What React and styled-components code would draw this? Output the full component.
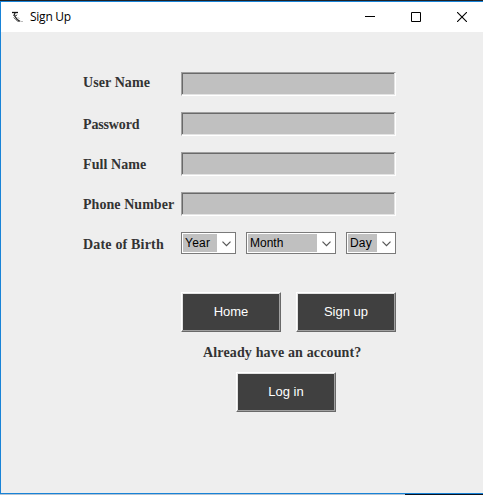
import React from 'react';
import styled, { createGlobalStyle } from 'styled-components';

const GlobalStyle = createGlobalStyle`
  * { box-sizing: border-box; }
  body { margin: 0; overflow: hidden; background: #ededed; }
`;

const Window = styled.div`
  width: 483px;
  height: 495px;
  display: flex;
  flex-direction: column;
`;

const TopEdge = styled.div`
  height: 1px;
  flex: none;
  background: #1f2226;
`;

const Frame = styled.div`
  flex: 1;
  display: flex;
  flex-direction: column;
  border: solid #1883d7;
  border-width: 1px 0 1px 1px;
  background: #eee;
`;

const BottomEdge = styled.div`
  height: 1px;
  flex: none;
  background: linear-gradient(to right, #b4c4d4 405px, #0a1220 405px);
`;

const TitleBar = styled.header`
  height: 30px;
  flex: none;
  display: flex;
  align-items: center;
  background: #fff;
  padding-left: 9px;
`;

const Title = styled.h1`
  margin: 0 auto 0 6px;
  font: 12px/16px 'Open Sans', 'Noto Sans', sans-serif;
  letter-spacing: -0.25px;
  color: #000;
`;

const WindowControl = styled.button`
  width: 46px;
  height: 30px;
  padding: 0;
  border: 0;
  background: none;
  display: grid;
  place-items: center;
`;

const Controls = styled.div`
  display: flex;
  margin-right: -2px;
`;

const Form = styled.form`
  width: 314px;
  margin: 40px 0 0 82px;
  display: flex;
  flex-direction: column;
`;

const FieldRow = styled.div`
  display: flex;
  height: 24px;
  margin-bottom: 16px;
`;

const Label = styled.label`
  width: 98px;
  flex: none;
  padding-top: ${(p) => p.$top}px;
  font: bold 14px/16px 'Liberation Serif', serif;
  letter-spacing: ${(p) => p.$spacing || 0}px;
  white-space: nowrap;
  color: #333;
`;

const Input = styled.input`
  width: 215px;
  height: 24px;
  padding: 0 2px;
  border: 1px solid;
  border-color: #a0a0a0 #fff #fff #a0a0a0;
  border-radius: 0;
  outline: 0;
  background: #c0c0c0;
  box-shadow: inset -1px -1px #e3e3e3, inset 1px 1px #696969;
`;

const Combos = styled.div`
  display: flex;
  gap: 10px;
`;

const Combo = styled.div`
  width: ${(p) => p.$width}px;
  height: 22px;
  display: flex;
  padding: 1px;
  border: 1px solid #7a7a7a;
  background: #fff;
`;

const ComboValue = styled.span`
  flex: 1;
  padding-left: 2px;
  background: #c0c0c0;
  font: 12px/18px 'Liberation Sans', sans-serif;
  color: #000;
  letter-spacing: ${(p) => p.$spacing || 0}px;
`;

const ComboArrow = styled.span`
  width: 17px;
  padding: 1px 0 0 2px;
  display: grid;
  place-items: center;
`;

const Actions = styled.div`
  display: flex;
  gap: 15px;
  margin: 20px 0 0 98px;
`;

const Button = styled.button`
  width: 100px;
  height: 40px;
  padding: 0 0 1px;
  border: 1px solid;
  border-color: #fff #696969 #696969 #fff;
  background: #404040;
  box-shadow: inset -1px -1px #a0a0a0, inset 1px 1px #e3e3e3;
  color: #fff;
  font: 13px 'Liberation Sans', sans-serif;
`;

const LoginPrompt = styled.p`
  margin: 13px 0 11px 120px;
  font: bold 14px/16px 'Liberation Serif', serif;
  letter-spacing: 0.15px;
  white-space: nowrap;
  color: #333;
`;

const LoginAction = styled.div`
  margin-left: 153px;
`;

const fields = [
  { label: 'User Name', top: 3, spacing: 0.08 },
  { label: 'Password', top: 5, spacing: -0.15 },
  { label: 'Full Name', top: 5, spacing: 0.08 },
  { label: 'Phone Number', top: 5, spacing: 0.05 },
];

const combos = [
  { value: 'Year', width: 55, spacing: 0.25 },
  { value: 'Month', width: 90, spacing: 0 },
  { value: 'Day', width: 50, spacing: 0.15 },
];

const AppIcon = () => (
  <svg width="14" height="14" viewBox="0 0 14 14" fill="none" stroke="#222">
    <path d="M2 2.5h6" stroke="#111" strokeWidth="1.3" />
    <path d="M5 3L4.2 5l1 2 2 2.5 3 2" strokeWidth="1.3" />
    <path d="M3 5.5h4M7 4.5L5.5 6.5M3.5 7.5l2 2 2.5 2" stroke="#555" strokeWidth=".8" />
    <path d="M8 7.5l1 1M11.5 11.5h1M8 11.5h2" stroke="#777" />
  </svg>
);

const Chevron = () => (
  <svg width="9" height="6" viewBox="0 0 9 6" fill="none" stroke="#555" strokeWidth="1.2">
    <path d="M.5 .7l4 4 4-4" />
  </svg>
);

export default function App() {
  return (
    <Window>
      <GlobalStyle />
      <TopEdge />
      <Frame>
        <TitleBar>
          <AppIcon />
          <Title>Sign Up</Title>
          <Controls>
            <WindowControl type="button" aria-label="Minimize">
              <svg width="10" height="10"><path d="M0 4.5h10" stroke="#000" /></svg>
            </WindowControl>
            <WindowControl type="button" aria-label="Maximize">
              <svg width="10" height="10"><path d="M.5.5h9v9h-9z" fill="none" stroke="#000" /></svg>
            </WindowControl>
            <WindowControl type="button" aria-label="Close">
              <svg width="10" height="10"><path d="M0 0l10 10M10 0L0 10" stroke="#000" strokeWidth="1.1" /></svg>
            </WindowControl>
          </Controls>
        </TitleBar>
        <Form>
          {fields.map((f) => (
            <FieldRow key={f.label}>
              <Label $top={f.top} $spacing={f.spacing}>{f.label}</Label>
              <Input aria-label={f.label} />
            </FieldRow>
          ))}
          <FieldRow>
            <Label $top={5} $spacing={0.18}>Date of Birth</Label>
            <Combos>
              {combos.map((c) => (
                <Combo key={c.value} $width={c.width}>
                  <ComboValue $spacing={c.spacing}>{c.value}</ComboValue>
                  <ComboArrow><Chevron /></ComboArrow>
                </Combo>
              ))}
            </Combos>
          </FieldRow>
          <Actions>
            <Button type="button">Home</Button>
            <Button type="button">Sign up</Button>
          </Actions>
          <LoginPrompt>Already have an account?</LoginPrompt>
          <LoginAction>
            <Button type="button">Log in</Button>
          </LoginAction>
        </Form>
      </Frame>
      <BottomEdge />
    </Window>
  );
}
